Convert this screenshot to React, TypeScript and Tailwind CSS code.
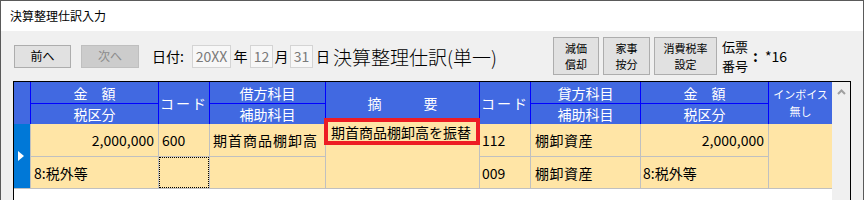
import React from 'react';

const FONT = { fontFamily: '"Noto Sans CJK JP", "Noto Sans", sans-serif' };
const COLS = 'grid-cols-[16px_127px_50px_115px_153px_50px_109px_127px_63px]';

function HeadCell({ children, className = '' }: { children?: React.ReactNode; className?: string }) {
  return (
    <div className={`bg-[#4169e1] text-white leading-none flex items-center justify-center whitespace-nowrap ${className}`}>
      {children}
    </div>
  );
}

function DataCell({ children, className = '' }: { children?: React.ReactNode; className?: string }) {
  return (
    <div className={`bg-[#ffe5a6] text-black text-[14px] leading-none flex items-center whitespace-nowrap overflow-hidden ${className}`}>
      {children}
    </div>
  );
}

function SmallButton({ lines, w }: { lines: string[]; w: string }) {
  return (
    <button className={`${w} h-[38px] bg-[#e1e1e1] border border-[#adadad] flex flex-col items-center justify-center text-[11px] text-black`}>
      {lines.map(l => (
        <div key={l} className="h-[16px] leading-[16px]">{l}</div>
      ))}
    </button>
  );
}

function DateBox({ value, w }: { value: string; w: string }) {
  return (
    <span className={`${w} h-[23px] border border-[#d4d4d4] bg-[#f7f7f7] text-[#7a7a7a] text-[14px] flex items-center justify-center leading-none`}>
      {value}
    </span>
  );
}

export default function App() {
  return (
    <div className="w-[864px] h-[200px] overflow-hidden bg-[#f0f0f0] border-l border-t border-r border-[#5a5a5a]" style={FONT}>
      {/* title bar */}
      <div className="h-[30px] bg-white flex items-center pl-[9px] text-[12px] text-black">決算整理仕訳入力</div>

      {/* toolbar */}
      <div className="h-[50px] flex items-center pl-[13px]">
        <button className="w-[57px] h-[23px] bg-[#e1e1e1] border border-[#adadad] text-[12px] text-black">前へ</button>
        <button className="ml-[10px] w-[58px] h-[23px] bg-[#cccccc] border border-[#bfbfbf] text-[12px] text-[#8d8d8d]">次へ</button>
        <span className="ml-[13px] w-[40px] text-[14px] text-black">日付:</span>
        <DateBox value="20XX" w="w-[39px]" />
        <span className="w-[19px] text-center text-[14px]">年</span>
        <DateBox value="12" w="w-[23px]" />
        <span className="w-[17px] text-center text-[14px]">月</span>
        <DateBox value="31" w="w-[23px]" />
        <span className="w-[20px] text-center text-[14px]">日</span>
        <span className="w-[220px] text-[19px] font-light text-black leading-none">決算整理仕訳(単一)</span>
        <div className="flex items-center gap-[4px]">
          <SmallButton lines={['減価', '償却']} w="w-[46px]" />
          <SmallButton lines={['家事', '按分']} w="w-[47px]" />
          <SmallButton lines={['消費税率', '設定']} w="w-[63px]" />
        </div>
        <div className="ml-[5px] flex flex-col text-[13px] text-black">
          <div className="h-[19px] leading-[19px]">伝票</div>
          <div className="h-[19px] leading-[19px]">番号</div>
        </div>
        <span className="ml-[5px] text-[15px] font-bold">:</span>
        <span className="ml-[7px] text-[14px]">*16</span>
      </div>

      {/* journal grid */}
      <div className="ml-[12px] w-[838px] h-[140px] border border-black bg-white flex">
        <div className="w-[818px] relative">
          <div className={`grid ${COLS} grid-rows-[21px_20px] gap-px bg-[#0000ff] text-[14px]`}>
            <HeadCell className="row-span-2" />
            <HeadCell>金　額</HeadCell>
            <HeadCell className="row-span-2 tracking-[2px]">コード</HeadCell>
            <HeadCell>借方科目</HeadCell>
            <HeadCell className="row-span-2">摘　　　要</HeadCell>
            <HeadCell className="row-span-2 tracking-[2px]">コード</HeadCell>
            <HeadCell>貸方科目</HeadCell>
            <HeadCell>金　額</HeadCell>
            <HeadCell className="row-span-2 flex-col">
              <div className="h-[17px] leading-[17px] text-[11px]">インボイス</div>
              <div className="h-[17px] leading-[17px] text-[11px]">無し</div>
            </HeadCell>
            <HeadCell>税区分</HeadCell>
            <HeadCell>補助科目</HeadCell>
            <HeadCell>補助科目</HeadCell>
            <HeadCell>税区分</HeadCell>
          </div>
          <div className={`grid ${COLS} grid-rows-[32px_31px] gap-px bg-[#c0c0c0] border-b border-[#c0c0c0]`}>
            <div className="row-span-2 bg-[#0078d7] flex items-center pl-[4px]">
              <svg width="6" height="10" viewBox="0 0 6 10">
                <path d="M0 0 L6 5 L0 10 Z" fill="white" />
              </svg>
            </div>
            <DataCell className="justify-end pr-[4px]">2,000,000</DataCell>
            <DataCell className="pl-[3px]">600</DataCell>
            <DataCell className="pl-[3px] tracking-[1px]">期首商品棚卸高</DataCell>
            <DataCell className="row-span-2" />
            <DataCell className="pl-[2px]">112</DataCell>
            <DataCell className="pl-[4px] tracking-[0.5px]">棚卸資産</DataCell>
            <DataCell className="justify-end pr-[4px]">2,000,000</DataCell>
            <DataCell className="row-span-2" />
            <DataCell className="pl-[3px]">8:税外等</DataCell>
            <DataCell className="border border-dotted border-black" />
            <DataCell />
            <DataCell className="pl-[2px]">009</DataCell>
            <DataCell className="pl-[4px] tracking-[0.5px]">棚卸資産</DataCell>
            <DataCell className="pl-[2px]">8:税外等</DataCell>
          </div>
          {/* highlight annotation */}
          <div className="absolute left-[310px] top-[36px] w-[156px] h-[27px] border-[4px] border-[#ed1c24] bg-[#ffe5a6] flex items-center pl-[3px] text-[14px] leading-none whitespace-nowrap">
            期首商品棚卸高を振替
          </div>
        </div>
        <div className="w-[18px] bg-[#f0f0f0] flex justify-center pt-[7px]">
          <svg width="9" height="6" viewBox="0 0 9 6">
            <path d="M1 5 L4.5 1.5 L8 5" stroke="#a0a0a0" strokeWidth="2" fill="none" />
          </svg>
        </div>
      </div>
    </div>
  );
}
